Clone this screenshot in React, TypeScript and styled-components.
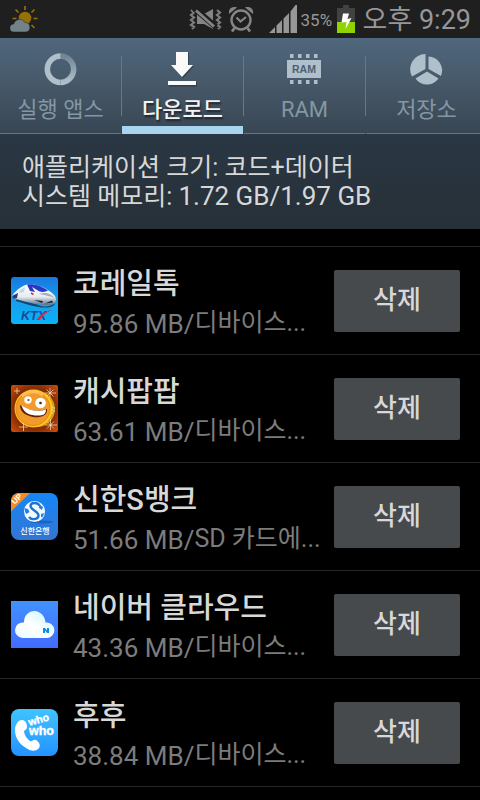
import React from 'react';
import styled, { createGlobalStyle } from 'styled-components';

const GlobalStyle = createGlobalStyle`
  *, *::before, *::after { box-sizing: border-box; }
  body {
    margin: 0;
    background: #000;
    font-family: Roboto, 'Noto Sans CJK KR', sans-serif;
    color: #d8d8d8;
  }
`;

const Screen = styled.div`
  min-height: 100vh;
  background: #000;
  overflow: hidden;
`;

const StatusBar = styled.header`
  display: flex;
  align-items: center;
  height: 38px;
  padding: 0 9px 0 10px;
  background: #1f1f1f;
  color: #979797;
`;

const StatusGroup = styled.div`
  display: flex;
  align-items: center;
  margin-left: auto;
`;

const StatusIcon = styled.svg<{ $gap: number }>`
  display: block;
  flex: none;
  margin-right: ${(p) => p.$gap}px;
`;

const Percent = styled.span`
  width: 36px;
  padding-top: 2px;
  font-size: 17px;
  line-height: 20px;
`;

const Clock = styled.time`
  padding-top: 2px;
  font-size: 27px;
  line-height: 36px;
  white-space: nowrap;
`;

const TabBar = styled.nav`
  display: flex;
  align-items: stretch;
  height: 96px;
  overflow: hidden;
  background: linear-gradient(#4f677d, #47596a 45%, #384653);
`;

const Tab = styled.button<{ $active?: boolean }>`
  display: flex;
  flex: 0 0 calc(25% + 1px);
  flex-direction: column;
  align-items: center;
  padding: 12px 0 0;
  border: 0;
  border-bottom: ${(p) => (p.$active ? '8px solid #a8d4f0' : '1px solid #607884')};
  background: none;
  color: ${(p) => (p.$active ? '#f2f2f2' : '#8497a3')};
  font-family: inherit;
  font-size: 22px;
  font-weight: ${(p) => (p.$active ? 500 : 400)};
  line-height: 32px;
  text-shadow: ${(p) => (p.$active ? '1px 2px 2px #1c242b' : 'none')};
  white-space: nowrap;

  svg {
    display: block;
    flex: none;
    margin-bottom: 4px;
  }
`;

const TabDivider = styled.span`
  flex: 0 0 1px;
  height: 60px;
  margin-top: 18px;
  background: #647a8a;
`;

const Summary = styled.section`
  padding: 19px 22px 18px;
  background: linear-gradient(#2a3744, #263037);
  font-size: 25px;
  line-height: 29px;

  p { margin: 0; }
`;

const Figures = styled.span`
  font-size: 26px;
`;

const AppList = styled.ul`
  margin: 17px 0 0;
  padding: 0;
  border-top: 1px solid #262626;
  list-style: none;
`;

const AppRow = styled.li`
  display: flex;
  align-items: center;
  height: 108px;
  padding: 0 20px 0 11px;
  border-bottom: 1px solid #262626;
`;

const AppIcon = styled.svg`
  display: block;
  flex: none;
  width: 47px;
  height: 47px;
`;

const AppText = styled.div`
  flex: 1;
  min-width: 0;
  padding: 8px 0 0 15px;
`;

const AppName = styled.h2`
  margin: 0;
  font-size: 29px;
  font-weight: 500;
  line-height: 39px;
  white-space: nowrap;
`;

const AppMeta = styled.div`
  display: flex;
  color: #7c7c7c;
  font-size: 26px;
  line-height: 40px;
  white-space: nowrap;
`;

const Location = styled.span`
  font-size: 25px;
  line-height: 37px;
`;

const DeleteButton = styled.button`
  flex: none;
  width: 126px;
  height: 62px;
  padding: 0 0 6px;
  border: 0;
  border-radius: 2px;
  background: #464a4d;
  color: #d8d8d8;
  font-family: inherit;
  font-size: 26px;
  font-weight: 500;
`;

const WeatherIcon = () => (
  <StatusIcon $gap={0} width="28" height="28" viewBox="0 0 28 28" aria-label="날씨">
    <g stroke="#957207" strokeWidth="1.7">
      <path d="M15 1v4M5.500 4.500l3 3M24.500 4.500l-3 3M2.500 13.500h4M23.500 13.500h4M21.500 20l3 3" />
    </g>
    <circle cx="15" cy="13" r="6.300" fill="#957207" />
    <path d="M4 27a4 4 0 0 1-.3-8 6 6 0 0 1 11.100-1.500 4.800 4.800 0 0 1 1.200 9.500z" fill="#74838a" stroke="#1f1f1f" strokeWidth=".5" />
  </StatusIcon>
);

const MuteIcon = () => (
  <StatusIcon $gap={7} width="33" height="24" viewBox="0 0 33 24" aria-label="진동">
    <path d="M2 3l3 2.500-3 2.500 3 2.500-3 2.500 3 2.500-3 2.500 3 2-2 2M28 3l3 2.500-3 2.500 3 2.500-3 2.500 3 2.500-3 2.500 3 2-2 2" fill="none" stroke="#7c7c7c" strokeWidth="2.200" />
    <path d="M8 7h7l9-5v20l-9-5H8z" fill="#858585" />
    <path d="M5 1l22 19" stroke="#1f1f1f" strokeWidth="6" />
    <path d="M7 3.500l18 16" stroke="#858585" strokeWidth="2.800" />
  </StatusIcon>
);

const AlarmIcon = () => (
  <StatusIcon $gap={14} width="26" height="28" viewBox="0 0 26 28" aria-label="알람">
    <g fill="none" stroke="#858585">
      <circle cx="12" cy="15" r="9.500" strokeWidth="2.400" />
      <path d="M7.500 12.500l4 4 5.500-4.500" strokeWidth="2.200" />
      <path d="M5.500 23l-2.500 3.500M18.500 23l2.500 3.500" strokeWidth="2.800" />
    </g>
    <path d="M0 9C-1 4 3 1 8 2.500zM24 9c1-5-3-8-8-6.500z" fill="#858585" />
  </StatusIcon>
);

const SignalIcon = () => (
  <StatusIcon $gap={4} width="28" height="28" viewBox="0 0 28 28" aria-label="신호">
    <path d="M0 28l6-6v6zM7.500 20.500L13 15v13H7.500zM14.500 13.500L20 8v20h-5.500zM21.500 6.500l5-6.500H28v28h-6.500z" fill="#979797" />
  </StatusIcon>
);

const BatteryIcon = () => (
  <StatusIcon $gap={8} width="18" height="28" viewBox="0 0 18 28" aria-label="충전 중">
    <path d="M6 0h6v3h6v25H0V3h6z" fill="#424242" />
    <path d="M0 17h18v11H0z" fill="#8fd400" />
    <path d="M6 8.500h6l-1.500 5.500 4-1L8.500 24l1-7-5 .5z" fill="#fff" />
  </StatusIcon>
);

const RunningIcon = () => (
  <svg width="40" height="40" viewBox="0 0 40 40" aria-hidden="true">
    <defs>
      <linearGradient id="ring" x1="0" y1="0" x2="0" y2="1">
        <stop offset="0" stopColor="#708596" />
        <stop offset="1" stopColor="#b0c0cb" />
      </linearGradient>
    </defs>
    <path d="M19.500 6a13.200 13.200 0 0 1 0 26.400" fill="none" stroke="url(#ring)" strokeWidth="5.500" />
    <path d="M19.500 6a13.200 13.200 0 0 0 0 26.400" fill="none" stroke="#b0c0cb" strokeWidth="5.500" />
  </svg>
);

const DownloadIcon = () => (
  <svg width="40" height="40" viewBox="0 0 40 40" aria-hidden="true">
    <g fill="#1c242b" opacity=".45" transform="translate(1 1)">
      <path d="M13 2h12v13h5L19 27.500 8 15h5zM5 31h28v4.500H5z" />
    </g>
    <path d="M13 2h12v13h5L19 27 8 15h5zM5 31h28v4H5z" fill="#fafafa" />
  </svg>
);

const RamIcon = () => (
  <svg width="40" height="40" viewBox="0 0 40 40" aria-hidden="true">
    <path d="M2 10h34v18H2zM5 4h3.500v4H5zM13 4h3.500v4H13zM21 4h3.500v4H21zM29 4h3.500v4H29zM5 30h3.500v4H5zM13 30h3.500v4H13zM21 30h3.500v4H21zM29 30h3.500v4H29z" fill="#b0c0cb" />
    <text x="19" y="22.500" textAnchor="middle" fontFamily="Liberation Sans" fontWeight="700" fontSize="10.500" fill="#4b6072">RAM</text>
  </svg>
);

const StorageIcon = () => (
  <svg width="40" height="40" viewBox="0 0 40 40" aria-hidden="true">
    <path d="M18.500 4v15L5 26.500A15.200 15.200 0 0 1 18.500 4zM21.500 6.500A14 14 0 0 1 34 26L21.500 19zM20 21.500L31.500 28.500a14 14 0 0 1-23 0z" fill="#b0c0cb" />
  </svg>
);

const KorailIcon = () => (
  <AppIcon viewBox="0 0 47 47" aria-hidden="true">
    <defs>
      <linearGradient id="ktxSky" x1="0" y1="0" x2="0" y2="1">
        <stop offset="0" stopColor="#1877e0" />
        <stop offset=".55" stopColor="#16a0ed" />
        <stop offset="1" stopColor="#08b4f4" />
      </linearGradient>
      <linearGradient id="ktxBody" x1="0" y1="0" x2="0" y2="1">
        <stop offset="0" stopColor="#fff" />
        <stop offset=".6" stopColor="#e8edf2" />
        <stop offset="1" stopColor="#5f7288" />
      </linearGradient>
    </defs>
    <rect width="47" height="47" rx="3" fill="url(#ktxSky)" />
    <path d="M5 21c8 4 18 5 25 8 6 1.500 11 0 14-3-1 4-6 5-11 4.500C22 30 12 26 5 24z" fill="#12304f" opacity=".8" />
    <path d="M1 19c4-6 9-9.500 15-11.500 6-1 14 1 20 5 5 3 9 6 9 10 0 4-4 6-10 5.500C25 27.500 12 24 4 22z" fill="url(#ktxBody)" />
    <path d="M16 7.500c8-1 15 2 21 6-3 2-8 2-11-.5l-5-3 3 5-5-1z" fill="#2638c4" />
    <path d="M1 19l6-3-1 5-3 1z" fill="#273b78" />
    <path d="M9 13l5-3-1 5-5 1z" fill="#c3d6ec" />
    <path d="M28 17c6-2 11-1 16 4-5-2-10-3-16-4z" fill="#9fb0c3" />
    <path d="M23 23l8 3 1-2zM34 26.500l8-1-1-2z" fill="#16263e" />
    <path d="M20 16l2.500 1.500" stroke="#d33" strokeWidth="1.500" />
    <text x="10" y="43" fontFamily="Liberation Sans" fontWeight="700" fontStyle="italic" fontSize="12.500" fill="#164a9c">KTX</text>
    <path d="M25 43c4-5 9-9 16-10-6 2.500-9 5.500-12.500 10z" fill="#e32645" />
  </AppIcon>
);

const CashIcon = () => (
  <AppIcon viewBox="0 0 47 47" aria-hidden="true">
    <defs>
      <radialGradient id="cashBg" r=".7">
        <stop offset="0" stopColor="#5e1e02" />
        <stop offset=".65" stopColor="#8a2e04" />
        <stop offset="1" stopColor="#d3500c" />
      </radialGradient>
    </defs>
    <rect width="47" height="47" rx="2" fill="url(#cashBg)" />
    <circle cx="26" cy="24" r="18" fill="#dba012" />
    <circle cx="22.500" cy="23.500" r="19" fill="#ffc61d" />
    <circle cx="22" cy="23.500" r="17" fill="#f39a2c" stroke="#e8860f" />
    <path d="M11 11c6-5 15-6 21-1" fill="none" stroke="#ffbd59" strokeWidth="3" />
    <path d="M9 20c8 6 18 7 27 4 1 7-7 9-14 8-8-2-13-5-13-12z" fill="#5e2204" />
    <path d="M10.500 20.500c8 5.500 17 6.500 24.500 4 0 5-3 6-8 6-8 0-14-2-16.500-10z" fill="#fff" />
    <circle cx="17" cy="15" r="3.700" fill="#fff" />
    <circle cx="29.500" cy="18" r="5.300" fill="#fff" />
    <circle cx="17.500" cy="15" r="1.100" fill="#7a4a1a" />
    <circle cx="29.500" cy="18" r="1.300" fill="#4a2105" />
    <path d="M41 21v8M43 22v5" stroke="#cdeab0" strokeWidth="1" strokeDasharray="2 1" />
    <path d="M39 3v10M34 8h11M35.500 4.500l7 7M42.500 4.500l-7 7M39.500 34v11M34 40h12M36 36.500l7 7M43 36.500l-7 7M12.500 38v8M8 42h9M6 3v6M3 6h6" stroke="#ffe5bf" strokeWidth=".7" />
  </AppIcon>
);

const ShinhanIcon = () => (
  <AppIcon viewBox="0 0 47 47" aria-hidden="true">
    <defs>
      <linearGradient id="bankBg" x1="0" y1="0" x2="0" y2="1">
        <stop offset="0" stopColor="#1686f8" />
        <stop offset="1" stopColor="#3375d3" />
      </linearGradient>
      <clipPath id="bankClip"><rect width="47" height="47" rx="8" /></clipPath>
    </defs>
    <g clipPath="url(#bankClip)">
      <rect width="47" height="47" fill="url(#bankBg)" />
      <ellipse cx="31" cy="29" rx="12" ry="1.500" fill="#1257ac" opacity=".6" />
      <path d="M0 0h19L0 18.500z" fill="#f58b22" />
      <text x="0" y="11" transform="rotate(-45)" textAnchor="middle" fontFamily="Liberation Sans" fontWeight="700" fontSize="8" fill="#fff">UP</text>
      <circle cx="23.500" cy="18.500" r="10.500" fill="#f4faff" />
      <path d="M28.500 12.500c-2-3.500-9-3.500-9 .5 0 4 8 5 8 9.500 0 4-7 5-9.500 1.500" fill="none" stroke="#1b75d8" strokeWidth="2.400" />
      <path d="M13.500 15l3.500 1 1.500 3-3 2-1.500-2zM28 11l4 3-1 3-3-2zM30 21l3-1-1 3.500-2 1z" fill="#2580e2" />
      <text x="24" y="40.500" textAnchor="middle" fontFamily="Noto Sans CJK KR" fontWeight="500" fontSize="8" fill="#fff">신한은행</text>
    </g>
  </AppIcon>
);

const CloudIcon = () => (
  <AppIcon viewBox="0 0 47 47" aria-hidden="true">
    <defs>
      <linearGradient id="cloudBg" x1="0" y1="0" x2="0" y2="1">
        <stop offset="0" stopColor="#4192ff" />
        <stop offset="1" stopColor="#426bff" />
      </linearGradient>
      <linearGradient id="cloudFill" x1="1" y1="0" x2="0" y2="1">
        <stop offset="0" stopColor="#c4f2fb" />
        <stop offset=".55" stopColor="#fff" />
        <stop offset="1" stopColor="#e6fbff" />
      </linearGradient>
    </defs>
    <rect width="47" height="47" fill="url(#cloudBg)" />
    <path d="M12 37a7.800 7.800 0 1 1 1-15.500C13 14 18 10 23.500 10S34 15 34.500 21.500A7.800 7.800 0 1 1 35 37z" fill="url(#cloudFill)" />
    <path d="M32 32v-5h2l2 2.500V27h2v5h-2l-2-2.500V32z" fill="#1688de" />
  </AppIcon>
);

const WhoWhoIcon = () => (
  <AppIcon viewBox="0 0 47 47" aria-hidden="true">
    <defs>
      <linearGradient id="whoBg" x1="0" y1="0" x2="0" y2="1">
        <stop offset="0" stopColor="#40c3ff" />
        <stop offset="1" stopColor="#2493ff" />
      </linearGradient>
    </defs>
    <rect width="47" height="47" rx="8" fill="url(#whoBg)" />
    <path d="M4 21c0-5 3-10 7-10 3 0 5 3 5 7 0 3-3 3-3 5 1 4 3 7 6 9 2 1 3-2 6-1 3 2 5 5 3 8-3 4-9 3-13 0C8 35 4 28 4 21z" fill="#fff" />
    <g fontFamily="Liberation Sans" fontWeight="700" fill="#fff" stroke="#fff" strokeWidth=".4">
      <text x="18.500" y="17" fontSize="10.500" transform="rotate(-16 18.500 17)">who</text>
      <text x="18" y="26" fontSize="12.500">who</text>
    </g>
  </AppIcon>
);

const tabs = [
  { label: '실행 앱스', Icon: RunningIcon },
  { label: '다운로드', Icon: DownloadIcon, active: true },
  { label: 'RAM', Icon: RamIcon },
  { label: '저장소', Icon: StorageIcon },
];

const apps = [
  { name: '코레일톡', size: '95.86 MB/', location: '디바이스...', Icon: KorailIcon },
  { name: '캐시팝팝', size: '63.61 MB/', location: '디바이스...', Icon: CashIcon },
  { name: '신한S뱅크', size: '51.66 MB/', location: 'SD 카드에...', Icon: ShinhanIcon },
  { name: '네이버 클라우드', size: '43.36 MB/', location: '디바이스...', Icon: CloudIcon },
  { name: '후후', size: '38.84 MB/', location: '디바이스...', Icon: WhoWhoIcon },
];

export default function App() {
  return (
    <Screen>
      <GlobalStyle />
      <StatusBar>
        <WeatherIcon />
        <StatusGroup>
          <MuteIcon />
          <AlarmIcon />
          <SignalIcon />
          <Percent>35%</Percent>
          <BatteryIcon />
          <Clock>오후 9:29</Clock>
        </StatusGroup>
      </StatusBar>
      <TabBar>
        {tabs.map(({ label, Icon, active }, i) => (
          <React.Fragment key={label}>
            {i > 0 && <TabDivider />}
            <Tab type="button" $active={active} aria-current={active ? 'page' : undefined}>
              <Icon />
              {label}
            </Tab>
          </React.Fragment>
        ))}
      </TabBar>
      <Summary>
        <p>애플리케이션 크기: 코드+데이터</p>
        <p>
          시스템 메모리: <Figures>1.72 GB/1.97 GB</Figures>
        </p>
      </Summary>
      <AppList>
        {apps.map(({ name, size, location, Icon }) => (
          <AppRow key={name}>
            <Icon />
            <AppText>
              <AppName>{name}</AppName>
              <AppMeta>
                {size}
                <Location>{location}</Location>
              </AppMeta>
            </AppText>
            <DeleteButton type="button" aria-label={`${name} 삭제`}>삭제</DeleteButton>
          </AppRow>
        ))}
      </AppList>
    </Screen>
  );
}
